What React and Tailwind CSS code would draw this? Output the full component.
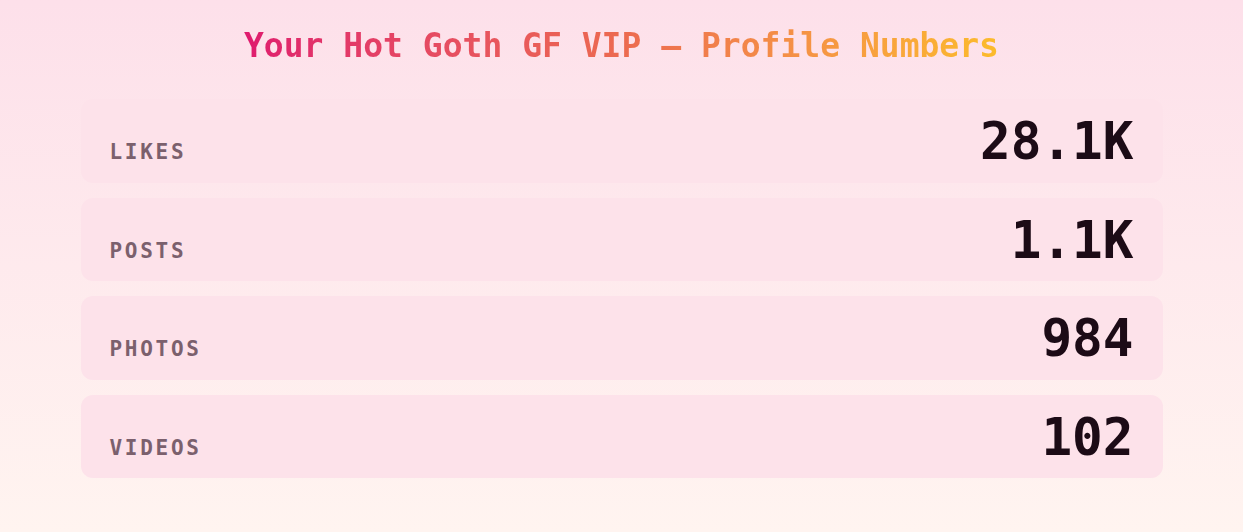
import React from "react";

const stats = [
  { label: "Likes", value: "28.1K" },
  { label: "Posts", value: "1.1K" },
  { label: "Photos", value: "984" },
  { label: "Videos", value: "102" },
];

export default function App() {
  return (
    <div
      className="min-h-screen h-[532px] bg-gradient-to-b from-[#fde0ea] to-[#fff4f0]"
      style={{ fontFamily: '"DejaVu Sans Mono", "Liberation Mono", monospace' }}
    >
      <div className="w-[1082px] mx-auto pt-[26px]">
        <h1 className="text-center leading-[40px]">
          <span className="inline-block text-[33px] font-bold bg-gradient-to-r from-[#df1a6e] via-[#ec6a50] to-[#fcbb2a] bg-clip-text text-transparent">
            Your Hot Goth GF VIP — Profile Numbers
          </span>
        </h1>

        <div className="mt-[27px] flex flex-col gap-[15px]">
          {stats.map((s) => (
            <div
              key={s.label}
              className="flex items-baseline justify-between rounded-xl bg-[#fde2ea] px-[29px] pt-[17px] pb-[14px]"
            >
              <span className="text-[21px] font-bold uppercase tracking-[0.13em] text-[#7b606d]">
                {s.label}
              </span>
              <span className="text-[51px] leading-[52px] font-bold text-[#1c0b16]">
                {s.value}
              </span>
            </div>
          ))}
        </div>
      </div>
    </div>
  );
}
